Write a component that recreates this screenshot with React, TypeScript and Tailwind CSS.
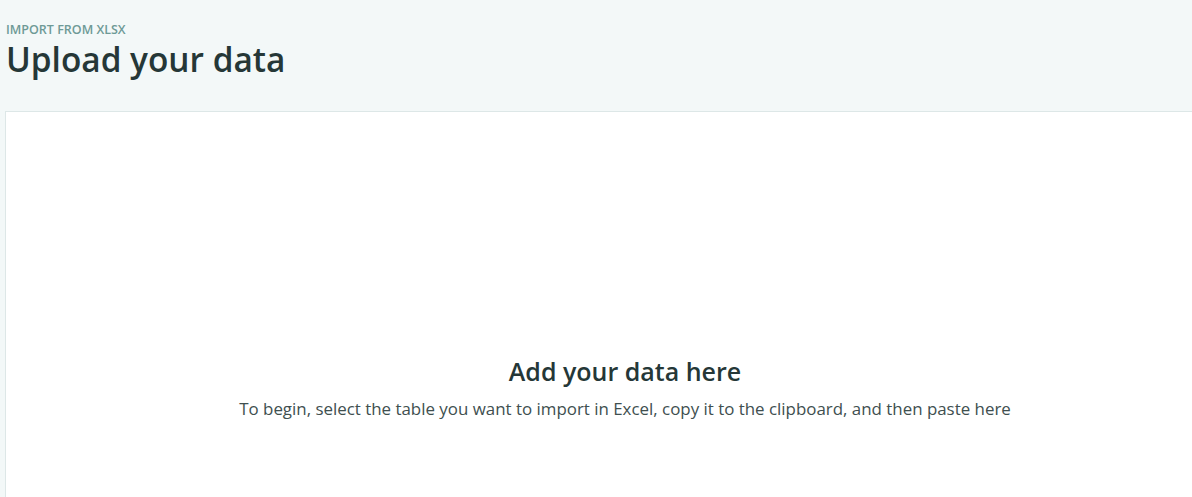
import React from "react";

export default function App() {
  return (
    <div
      className="w-[1192px] h-[497px] overflow-hidden bg-[#f3f8f8] flex flex-col"
      style={{ fontFamily: '"Open Sans", "Noto Sans", sans-serif' }}
    >
      <header className="pl-[6px] pt-[22px] h-[111px] shrink-0">
        <div className="text-[12.5px] leading-[16px] font-semibold text-[#6e9a96] uppercase">
          Import from XLSX
        </div>
        <h1 className="text-[33.4px] leading-[40px] font-semibold text-[#253737] mt-[1px]">
          Upload your data
        </h1>
      </header>
      <main className="ml-[5px] flex-1 bg-white border-l border-t border-[#dde7e7] flex flex-col items-center pt-[243px] pl-[52px]">
        <h2 className="text-[25px] leading-[32px] font-semibold text-[#253737]">
          Add your data here
        </h2>
        <p className="mt-[11px] text-[16.9px] leading-[22px] text-[#404f4f]">
          To begin, select the table you want to import in Excel, copy it to the clipboard, and then paste here
        </p>
      </main>
    </div>
  );
}
